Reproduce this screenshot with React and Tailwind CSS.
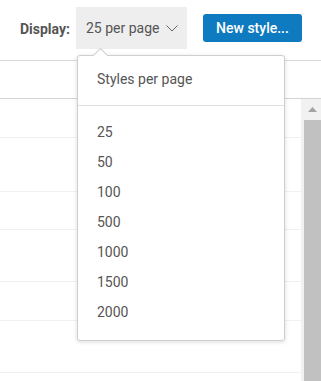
import React, { useState } from "react";

const options = [25, 50, 100, 500, 1000, 1500, 2000];
const rowHeights = [39, 54, 38, 52, 39, 52, 39];

const App = () => {
    const [perPage, setPerPage] = useState(25);

    return (
        <div className="relative w-[321px] h-[381px] overflow-hidden bg-white text-[#555]" style={{ fontFamily: "Roboto, 'Liberation Sans', sans-serif" }}>
            {/* top bar */}
            <div className="h-[61px] flex items-start border-b border-[#d9d9d9]">
                <span className="ml-[20px] mt-[19px] w-[49px] text-[14px] font-bold text-[#555] whitespace-nowrap">Display:</span>
                <button className="ml-[7px] mt-[7px] w-[111px] h-[42px] bg-[#eeeeee] flex items-center pl-[10px] text-[14px] text-[#555]">
                    {perPage} per page
                    <svg className="ml-[6px]" width="12" height="7" viewBox="0 0 12 7" fill="none">
                        <path d="M0.5 0.5 L6 6 L11.5 0.5" stroke="#666" strokeWidth="1" />
                    </svg>
                </button>
                <button className="ml-[16px] mt-[14px] w-[99px] h-[28px] rounded-[3px] bg-[#0e7abf] text-white text-[14px] font-medium">New style...</button>
            </div>

            {/* table header row */}
            <div className="h-[38px] border-b border-[#d4d4d4]"></div>

            {/* table body with scrollbar */}
            <div className="flex">
                <div className="w-[301px]">
                    {rowHeights.map((h, i) => (
                        <div key={i} className="border-b border-[#f0f0f0]" style={{ height: h }}></div>
                    ))}
                </div>
                <div className="w-[20px] h-[290px] bg-[#f1f1f1] flex flex-col items-end">
                    <div className="w-[18px] h-[21px] flex items-center justify-center">
                        <svg width="9" height="5" viewBox="0 0 9 5">
                            <path d="M0 5 L4.5 0 L9 5 Z" fill="#a3a3a3" />
                        </svg>
                    </div>
                    <div className="w-[17px] flex-1 bg-[#c1c1c1]"></div>
                </div>
            </div>

            {/* dropdown menu */}
            <div className="absolute left-[77px] top-[55px] w-[208px] h-[286px] bg-white border border-[#cfcfcf] rounded-[3px] shadow-[0_1px_4px_rgba(0,0,0,0.15)]">
                <div className="absolute -top-[6px] left-[17px] w-[11px] h-[11px] bg-white border-l border-t border-[#cfcfcf] rotate-45"></div>
                <div className="h-[50px] border-b border-[#e0e0e0] flex items-center pl-[19px] pb-[3px] text-[14px] text-[#555]">Styles per page</div>
                <ul className="pt-[11px]">
                    {options.map((o) => (
                        <li key={o} className="h-[30px] flex items-center pl-[19px] text-[14px] text-[#555] cursor-pointer" onClick={() => setPerPage(o)}>{o}</li>
                    ))}
                </ul>
            </div>
        </div>
    );
};

export default App;
